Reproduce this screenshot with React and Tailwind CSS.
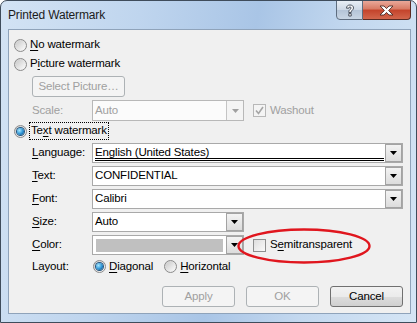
import React from 'react';

// mnemonic underline
const U = ({ children }) => <span className="underline underline-offset-[2px]">{children}</span>;

const Radio = ({ checked }) => (
    <span className="flex h-[13px] w-[13px] shrink-0 items-center justify-center rounded-full border border-[#8b8b8b] bg-[linear-gradient(135deg,#d0d0d0,#f8f8f8)]">
        {checked ? (
            <span className="h-[7px] w-[7px] rounded-full bg-[radial-gradient(circle_at_35%_35%,#a6e8ff,#2b92d4_55%,#0a3a66)] shadow-[0_0_0_1px_#24557f]" />
        ) : (
            <span className="h-[9px] w-[9px] rounded-full bg-[linear-gradient(135deg,#cacaca,#fbfbfb)]" />
        )}
    </span>
);

const Check = ({ checked, disabled }) => (
    <span
        className={
            disabled
                ? 'flex h-[13px] w-[13px] shrink-0 items-center justify-center border border-[#b8b8b8] bg-[#f4f4f4]'
                : 'flex h-[13px] w-[13px] shrink-0 items-center justify-center border border-[#8e8f8f] bg-[linear-gradient(135deg,#dedede,#fafafa)]'
        }
    >
        {checked && (
            <svg width="9" height="9" viewBox="0 0 9 9">
                <path d="M1 4.5l2.5 3L8 1" fill="none" stroke="#a6a6a6" strokeWidth="1.6" />
            </svg>
        )}
    </span>
);

const Arrow = ({ disabled }) => (
    <svg width="7" height="4" viewBox="0 0 7 4">
        <path d="M0 0h7L3.5 4z" fill={disabled ? '#a0a0a0' : '#000'} />
    </svg>
);

const DropBtn = ({ disabled }) => (
    <span
        className={
            disabled
                ? 'flex h-full w-[17px] shrink-0 items-center justify-center border-l border-[#c4c4c4] bg-[#f4f4f4]'
                : 'flex h-full w-[17px] shrink-0 items-center justify-center border border-[#a3a3a3] bg-[linear-gradient(#f3f3f3,#dcdcdc)]'
        }
    >
        <Arrow disabled={disabled} />
    </span>
);

const Label = ({ children }) => <span className="w-[60px] shrink-0">{children}</span>;

const Button = ({ children, disabled, wide }) => (
    <div
        className={
            (wide ? 'w-[93px] ' : 'w-[73px] ') +
            (disabled
                ? 'flex h-[21px] items-center justify-center whitespace-nowrap rounded-[3px] border border-[#adb2b5] bg-[#f4f4f4] text-[#a0a0a0]'
                : 'flex h-[21px] items-center justify-center whitespace-nowrap rounded-[3px] border border-[#707070] bg-[linear-gradient(#f2f2f2,#ebebeb_50%,#dddddd_50%,#cfcfcf)] text-black')
        }
    >
        {children}
    </div>
);

export default function App() {
    return (
        <div className="relative h-[323px] w-[417px] overflow-hidden rounded-t-[7px] border border-[#3f4c5b] bg-[linear-gradient(100deg,#d3e3f4_0%,#bfd5ee_30%,#a9c5e6_55%,#c3d8ef_75%,#d5e5f5_100%)] font-['Liberation_Sans',sans-serif] text-[11.5px] leading-none tracking-[-0.15px] text-black">
            {/* Title bar */}
            <div className="flex h-[28px]">
                <span className="self-center pl-[7px] text-[12px] text-[#1b1b1b]">Printed Watermark</span>
                <div className="ml-auto mr-[5px] -mt-px flex h-[20px]">
                    <div className="flex w-[27px] items-center justify-center rounded-bl-[4px] border border-[#5e6d7f] bg-[linear-gradient(#e8eef5,#cdd8e5_50%,#b4c4d7_50%,#c9d6e4)]">
                        <svg width="10" height="13" viewBox="0 0 10 13">
                            <path
                                d="M1.5 4.2C1.5 2 3 1 5 1s3.5 1 3.5 3c0 2-2.3 2.3-2.3 3.9v0.6H3.8v-0.8c0-2.2 2.3-2.4 2.3-3.7 0-0.7-0.5-1.1-1.1-1.1-0.7 0-1.1 0.5-1.1 1.3z M3.8 9.6h2.4V12H3.8z"
                                fill="#fff"
                                stroke="#3c4450"
                                strokeWidth="0.9"
                            />
                        </svg>
                    </div>
                    <div className="flex w-[48px] items-center justify-center rounded-br-[4px] border border-l-0 border-[#5a2a22] bg-[linear-gradient(#e9a899,#d77a64_45%,#c4432b_50%,#d2664c)]">
                        <svg width="15" height="11" viewBox="0 0 15 11">
                            <path
                                d="M1 1h4l2.5 2.6L10 1h4l-4.4 4.5L14 10h-4L7.5 7.4 5 10H1l4.4-4.5z"
                                fill="#fff"
                                stroke="#4a2a26"
                                strokeWidth="0.9"
                                strokeLinejoin="round"
                            />
                        </svg>
                    </div>
                </div>
            </div>

            {/* Client area */}
            <div className="ml-[7px] flex h-[285px] w-[403px] flex-col border border-[#8fa3ba] bg-[#f0f0f0]">
                <div className="mt-[6px] flex h-[18px] items-center gap-[3px] pl-[5px]">
                    <Radio />
                    <span><U>N</U>o watermark</span>
                </div>
                <div className="mt-px flex h-[18px] items-center gap-[3px] pl-[5px]">
                    <Radio />
                    <span>P<U>i</U>cture watermark</span>
                </div>
                <div className="mt-[3px] pl-[23px]">
                    <Button disabled wide>Select Picture…</Button>
                </div>
                <div className="mt-[3px] flex h-[21px] items-center pl-[23px] text-[#a0a0a0]">
                    <Label>Scale:</Label>
                    <div className="flex h-full w-[152px] items-stretch border border-[#b8b8b8] bg-[#fbfbfb]">
                        <span className="flex flex-1 items-center pl-[2px]">Auto</span>
                        <DropBtn disabled />
                    </div>
                    <span className="ml-[9px] flex items-center gap-[4px]">
                        <Check checked disabled />
                        <span>Washout</span>
                    </span>
                </div>
                <div className="mt-px flex h-[18px] items-center gap-[2px] pl-[5px]">
                    <Radio checked />
                    <span className="flex h-full items-center border border-dotted border-black px-px">
                        Te<U>x</U>t watermark
                    </span>
                </div>
                <div className="mt-[3px] flex h-[20px] items-center pl-[23px]">
                    <Label><U>L</U>anguage:</Label>
                    <div className="relative flex h-full w-[311px] items-stretch border border-[#a9a9a9] bg-white">
                        <span className="flex flex-1 items-center pl-[2px]">English (United States)</span>
                        <DropBtn />
                        <span className="absolute left-[2px] right-[18px] top-[14px] h-px bg-black" />
                        <span className="absolute left-[2px] right-[18px] top-[16px] h-px bg-black" />
                    </div>
                </div>
                <div className="mt-[3px] flex h-[20px] items-center pl-[23px]">
                    <Label><U>T</U>ext:</Label>
                    <div className="flex h-full w-[311px] items-stretch border border-[#a9a9a9] bg-white">
                        <span className="flex flex-1 items-center pl-[2px]">CONFIDENTIAL</span>
                        <DropBtn />
                    </div>
                </div>
                <div className="mt-[3px] flex h-[20px] items-center pl-[23px]">
                    <Label><U>F</U>ont:</Label>
                    <div className="flex h-full w-[311px] items-stretch border border-[#a9a9a9] bg-white">
                        <span className="flex flex-1 items-center pl-[2px]">Calibri</span>
                        <DropBtn />
                    </div>
                </div>
                <div className="mt-[3px] flex h-[20px] items-center pl-[23px]">
                    <Label><U>S</U>ize:</Label>
                    <div className="flex h-full w-[152px] items-stretch border border-[#a9a9a9] bg-white">
                        <span className="flex flex-1 items-center pl-[2px]">Auto</span>
                        <DropBtn />
                    </div>
                </div>
                <div className="mt-[3px] flex h-[20px] items-center pl-[23px]">
                    <Label><U>C</U>olor:</Label>
                    <div className="flex h-full w-[152px] items-stretch border border-[#a9a9a9] bg-white">
                        <span className="flex flex-1 items-center px-[3px]">
                            <span className="h-[13px] w-full bg-[#c0c0c0]" />
                        </span>
                        <DropBtn />
                    </div>
                    <span className="ml-[9px] flex items-center gap-[4px]">
                        <Check />
                        <span>S<U>e</U>mitransparent</span>
                    </span>
                </div>
                <div className="mt-[3px] flex h-[17px] items-center pl-[23px]">
                    <Label>Layout:</Label>
                    <span className="flex items-center gap-[3px] pl-px">
                        <Radio checked />
                        <span><U>D</U>iagonal</span>
                    </span>
                    <span className="ml-[11px] flex items-center gap-[3px]">
                        <Radio />
                        <span><U>H</U>orizontal</span>
                    </span>
                </div>
                <div className="mt-[11px] flex justify-end gap-[11px] pr-[7px]">
                    <Button disabled>Apply</Button>
                    <Button disabled>OK</Button>
                    <Button>Cancel</Button>
                </div>
            </div>

            {/* red annotation ellipse */}
            <svg className="absolute left-[235px] top-[226px]" width="136" height="38" viewBox="0 0 136 38">
                <ellipse cx="68" cy="19" rx="65.5" ry="16.5" fill="none" stroke="#e0161e" strokeWidth="2.4" />
            </svg>
        </div>
    );
}
